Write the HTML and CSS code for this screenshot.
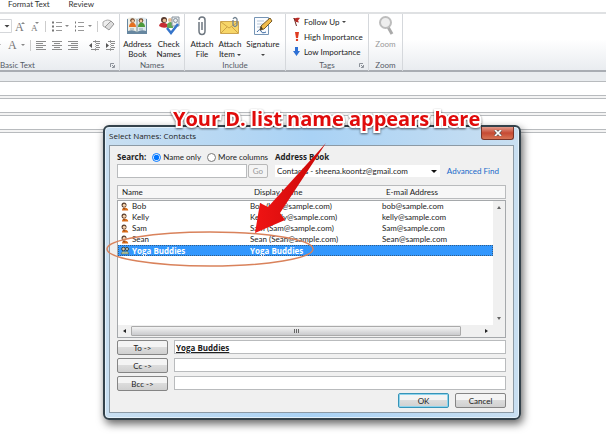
FILE: index.html
```html
<!DOCTYPE html>
<html lang="en">
<head>
<meta charset="utf-8">
<title>Select Names: Contacts</title>
<link rel="stylesheet" href="styles.css">
</head>
<body>
<svg class="sprite" aria-hidden="true">
  <symbol id="person" viewBox="0 0 8 9"><circle cx="3" cy="3" r="2.500" fill="#5b4030"/><circle cx="3.200" cy="3.200" r="1.500" fill="#f6d3ae"/><path d="M1 8.600c0-2 1-3 2.500-3s3.800 1 3.800 3z" fill="#d96c18"/><path d="M2 6l2 1" stroke="#704020" stroke-width=".8"/></symbol>
</svg>

<header>
  <nav class="tabs"><a href="#format">Format Text</a><a href="#review">Review</a></nav>
  <div class="ribbon">
    <section class="group">
      <div class="format">
        <svg viewBox="0 0 119 40" aria-hidden="true">
          <path d="M0 5.500h11.500v13H0" fill="#fff" stroke="#d5d7da"/>
          <path d="M4.500 11h5L7 13.500z" fill="#444"/>
          <path d="M21 10l2-2 2 2zM35 8h4l-2 2zM65 11h4l-2 2zM88 11h4l-2 2zM0 30h1l-1 1M21 30h4l-2 2z" fill="#888"/>
          <path d="M45.500 7v11M97.500 7v11M30.500 26v11" stroke="#ccc"/>
          <path d="M52 8.500h2M52 12.500h2M52 16.500h2M75 8.500h1M75 12.500h1M75 16.500h1" stroke="#777" stroke-width="2"/>
          <path d="M56 8.500h6M56 12.500h6M56 16.500h6M78 8.500h6M78 12.500h6M78 16.500h6" stroke="#999"/>
          <path d="M36 27.500h10M36 29.500h7M36 31.500h10M36 33.500h7M36 35.500h10M52 27.500h10M54 29.500h6M52 31.500h10M54 33.500h6M52 35.500h10M68 27.500h10M71 29.500h7M68 31.500h10M71 33.500h7M68 35.500h10M93 27.500h7M96 29.500h4M96 31.500h3M96 33.500h4M91 35.500h8M108 27.500h7M111 29.500h4M111 31.500h3M111 33.500h4M106 35.500h8" stroke="#8c8c8c"/>
          <path d="M89 31.500l3-2.500v5zM109 31.500l-3-2.500v5z" fill="#555"/>
          <path d="M95.500 26v11M110.500 26v11" stroke="#aaa" stroke-dasharray="1 1"/>
          <path d="M103 8q5-4 9 0v4q-4 4-9 0z" fill="#eee" stroke="#aaa"/><path d="M105 13l6-6 3 3-5 6z" fill="#ddd" stroke="#999"/>
        </svg>
        <span class="letter big">A</span><span class="letter small">A</span><span class="letter ink">A</span>
      </div>
      <h2 class="left">Basic Text<svg class="launch" viewBox="0 0 5 5"><path d="M.500 4V.500H4M2 2l2 2M4.500 2v2.500H2" fill="none" stroke="#8d929a"/></svg></h2>
    </section>
    <section class="group">
      <div class="tools names">
        <button type="button"><svg viewBox="0 0 22 20"><path d="M1 3q5-2 10 0 5-2 10 0v15H1z" fill="#6787a0"/><path d="M2 2q5-2 9 1v13q-4-3-9-1z" fill="#f0efe5"/><path d="M20 2q-5-2-9 1v13q4-3 9-1z" fill="#dfe9ed"/><circle cx="6.500" cy="4.500" r="2.300" fill="#674025"/><circle cx="6.700" cy="5" r="1.400" fill="#efc49c"/><path d="M3 11c0-6 7-6 7 0z" fill="#e57021"/><circle cx="15" cy="4.500" r="2.300" fill="#674025"/><circle cx="15" cy="5" r="1.400" fill="#efc49c"/><path d="M12 11c0-6 7-6 7 0z" fill="#4d9a3b"/><path d="M4 13h4M13 13h4" stroke="#8ba2b0"/><path d="M11 3v14" stroke="#74909c"/></svg>Address<br>Book</button>
        <button type="button"><svg viewBox="0 0 22 20"><circle cx="6" cy="4" r="3" fill="#583a2e"/><circle cx="6.500" cy="4.500" r="1.800" fill="#e9bd94"/><path d="M1 10q1-4 5-3 4 0 4 4-5 2-9-1z" fill="#c72d34"/><path d="M9 8q4-4 6 0v4H9z" fill="#61a754"/><circle cx="12" cy="4" r="2" fill="#e9bd94"/><path d="M14 1h7v9h-7z" fill="#e9edf0" stroke="#87939c"/><circle cx="17.500" cy="4.500" r="2" fill="none" stroke="#87939c"/><path d="M9 12l4 5 7-9" fill="none" stroke="#3574ca" stroke-width="2.500"/></svg>Check<br>Names</button>
      </div>
      <h2>Names</h2>
    </section>
    <section class="group">
      <div class="tools include">
        <button type="button"><svg viewBox="0 0 22 20"><path d="M8 6v9q0 3.500 3 3.500t3-3.500V4q0-3-3-3T8 4M11 6v8" fill="none" stroke="#6e7780" stroke-width="1.500"/></svg>Attach<br>File</button>
        <button type="button"><svg viewBox="0 0 22 20"><path d="M1.500 5.500h18v12h-18z" fill="#f7d668" stroke="#cda550"/><path d="M2 6l8 6 9-6M2 17l6-6M19 17l-6-6" fill="none" stroke="#cda344"/><path d="M14 4v5q2 3 4 0V3q-2-3-4 0" fill="none" stroke="#718391" stroke-width="1.300"/></svg>Attach<br>Item <i class="caret"></i></button>
        <button type="button"><svg viewBox="0 0 22 20"><path d="M2.500 1.500h14v17h-14z" fill="#fafcff" stroke="#7695b5"/><path d="M5 5h7M5 8h6M5 11h4" stroke="#b6c6d6"/><path d="M5 16q3-4 4-1t5 1" fill="none" stroke="#3766a1"/><path d="M8 14l1-4 9-8 2 3-8 8z" fill="#f1bc4c" stroke="#775b28"/><path d="M8 14l1-4 2 3z" fill="#443a2b"/></svg>Signature<br><i class="caret"></i></button>
      </div>
      <h2>Include</h2>
    </section>
    <section class="group">
      <div class="tags">
        <button type="button"><svg viewBox="0 0 9 9"><path d="M1 1c2 1 4-1 7 0L6 3.500l1 2-3-.5" fill="#b92a25"/><path d="M2 1l2.500 8" stroke="#6b2a22"/></svg>Follow Up <i class="caret"></i></button>
        <button type="button"><svg viewBox="0 0 9 9"><path d="M3 0h4L6 6H4z" fill="#df3b20"/><circle cx="5" cy="8" r="1.200" fill="#df3b20"/></svg>High Importance</button>
        <button type="button"><svg viewBox="0 0 9 9"><path d="M3 0h3v4h2L4.500 9 1 4h2z" fill="#2e70d4"/></svg>Low Importance</button>
      </div>
      <h2>Tags<svg class="launch" viewBox="0 0 5 5"><path d="M.500 4V.500H4M2 2l2 2M4.500 2v2.500H2" fill="none" stroke="#8d929a"/></svg></h2>
    </section>
    <section class="group">
      <div class="tools zoom">
        <button type="button" disabled><svg viewBox="0 0 22 20"><path d="M13 11l4 7" stroke="#aaa" stroke-width="3"/><circle cx="10.500" cy="6.500" r="5.500" fill="#eee" stroke="#bdbdbd" stroke-width="2"/></svg>Zoom</button>
      </div>
      <h2>Zoom</h2>
    </section>
  </div>
</header>
<div class="band"></div>
<div class="line"></div><div class="line"></div><div class="line"></div>

<main class="dialog" role="dialog" aria-labelledby="title">
  <div class="titlebar"><h1 id="title">Select Names: Contacts</h1><button type="button" class="close" aria-label="Close"><svg viewBox="0 0 8 6"><path d="M1 0l6 6M7 0L1 6" stroke="#555" stroke-width="3"/><path d="M1 0l6 6M7 0L1 6" stroke="#fff" stroke-width="1.700"/></svg></button></div>
  <form class="client">
    <div class="search">
      <div class="modes"><label class="strong" for="query">Search:</label>
        <label class="mode"><input type="radio" name="mode" checked>Name only</label>
        <label class="mode"><input type="radio" name="mode">More columns</label></div>
      <label class="strong" for="book">Address Book</label>
      <div class="find"><input type="text" id="query"><button type="button" disabled>Go</button></div>
      <div class="book"><span class="drop"><select id="book"><option>Contacts - sheena.koontz@gmail.com</option></select><svg viewBox="0 0 6 3"><path d="M0 0h6L3 3z" fill="#111"/></svg></span><a href="#advanced">Advanced Find</a></div>
    </div>
    <div class="list">
      <table>
        <thead><tr><th>Name</th><th>Display Name</th><th>E-mail Address</th></tr></thead>
        <tbody>
          <tr><td><svg><use href="#person"/></svg>Bob</td><td>Bob (bob@sample.com)</td><td>bob@sample.com</td></tr>
          <tr><td><svg><use href="#person"/></svg>Kelly</td><td>Kelly (kelly@sample.com)</td><td>kelly@sample.com</td></tr>
          <tr><td><svg><use href="#person"/></svg>Sam</td><td>Sam (Sam@sample.com)</td><td>Sam@sample.com</td></tr>
          <tr><td><svg><use href="#person"/></svg>Sean</td><td>Sean (Sean@sample.com)</td><td>Sean@sample.com</td></tr>
          <tr class="selected"><td><svg viewBox="0 0 8 9"><circle cx="2.500" cy="3" r="1.800" fill="#d8c3a8" stroke="#344"/><circle cx="6" cy="3" r="1.500" fill="#cdd" stroke="#344"/><path d="M0 8q1-4 4-2 3-2 4 2z" fill="#bcd0a4" stroke="#344" stroke-width=".5"/></svg>Yoga Buddies</td><td>Yoga Buddies</td><td></td></tr>
        </tbody>
      </table>
      <div class="vbar"><i class="up"></i><i class="down"></i></div>
      <div class="hbar"><i class="prev"></i><div class="thumb"><i></i><i></i><i></i></div><i class="next"></i></div>
    </div>
    <div class="recipients">
      <button type="button">To -&gt;</button><input type="text" class="to" aria-label="To" value="Yoga Buddies">
      <button type="button">Cc -&gt;</button><input type="text" aria-label="Cc">
      <button type="button">Bcc -&gt;</button><input type="text" aria-label="Bcc">
    </div>
    <div class="actions"><button type="button" class="ok">OK</button><button type="button">Cancel</button></div>
  </form>
</main>

<svg class="marks" viewBox="0 0 606 437" aria-hidden="true">
  <defs><linearGradient id="red" x1="0" x2="1"><stop offset="0" stop-color="#f01414"/><stop offset="1" stop-color="#c80808"/></linearGradient></defs>
  <ellipse cx="210" cy="249" rx="103" ry="17" fill="none" stroke="#d9825b" stroke-width="1.500"/>
  <path d="M326 143L268 207l-8-4-5 30 30-13-5-7z" fill="url(#red)"/>
</svg>
<p class="callout">Your D. list name appears here</p>
</body>
</html>
```
FILE: styles.css
```css
* { box-sizing: border-box; }
body { margin: 0; min-height: 100vh; overflow: hidden; position: relative; background: #fff; color: #222; font: 8px/12px Lato, "Open Sans", sans-serif; }
h1, h2, p { margin: 0; font: inherit; }
button, input, select { margin: 0; padding: 0; color: inherit; font: inherit; }
svg { display: block; }
.sprite { position: absolute; width: 0; height: 0; }
.tabs { display: flex; gap: 19px; height: 12px; padding: 0 8px; line-height: 9px; }
.tabs a { color: #333; text-decoration: none; }
.ribbon { display: grid; grid-template-columns: 120px 65px 101px 83px 34px; height: 60px; border-top: 2px solid #dfe1e3; border-bottom: 2px solid #a9adb3; background: linear-gradient(#fff 45%, #e9ecf0); }
.group { display: grid; grid-template-rows: 1fr 12px; border-right: 1px solid #d5d8dc; }
.group h2 { position: relative; color: #555b66; text-align: center; }
.group h2.left { text-align: left; }
.launch { position: absolute; right: 4px; top: 4px; width: 5px; height: 5px; }
.format { position: relative; }
.format svg { width: 119px; height: 40px; }
.letter { position: absolute; color: #777; font-family: "Liberation Serif", serif; }
.big { left: 15px; top: 7px; font-size: 12px; }
.small { left: 31px; top: 8px; font-size: 9px; }
.ink { left: 8px; top: 25px; font-size: 12px; }
.tools { display: flex; justify-content: center; gap: 5px; padding-top: 2px; }
.tools button, .tags button { border: 0; background: none; line-height: 10px; white-space: nowrap; }
.tools button { display: block; align-self: start; }
.tools svg { width: 22px; height: 20px; margin: 0 auto 3px; }
.tags { display: grid; grid-template-rows: repeat(3, 15px); padding-left: 6px; }
.tags button { display: flex; align-items: center; gap: 3px; }
.tags svg { width: 9px; height: 9px; }
.caret { display: inline-block; border: 2px solid transparent; border-top-color: #444; border-bottom: 0; vertical-align: middle; }
.tools button:disabled, .find button:disabled { color: #999; }
.band { height: 10px; border-bottom: 1px solid #b8bbbe; background: #e9ecef; }
.line { height: 4px; margin-top: 13px; border: 1px solid #b8bbbe; border-width: 1px 0; background: #f4f4f4; }
.dialog { position: absolute; left: 103px; right: 85px; top: 125px; padding: 0 5px 5px 4px; border: 2px solid #34424b; border-radius: 6px; background: linear-gradient(90deg, #c9dff1, #a9d2f5 50%, #c9dff1); box-shadow: 2px 4px 9px #0009, inset 0 0 0 1px #e4f1fa; }
.titlebar { display: flex; justify-content: space-between; height: 18px; font-family: "Open Sans", sans-serif; line-height: 18px; }
.close { width: 33px; height: 13px; display: grid; place-items: center; border: 1px solid #793328; border-top: 0; border-radius: 0 0 3px 3px; background: linear-gradient(#e29b8b, #c64a33 50%, #d77455); }
.close svg { width: 8px; height: 6px; }
.client { display: block; padding: 5px 7px 4px; border: 1px solid #8c9aa5; background: #f0f0f0; }
.search { display: grid; grid-template-columns: 151px 1fr; grid-template-rows: 12px 14px; gap: 1px 7px; }
.strong { font-family: "Open Sans", sans-serif; font-weight: bold; }
.modes, .mode, .find, .book { display: flex; align-items: center; white-space: nowrap; }
.modes { gap: 6px; }
.mode { gap: 2px; }
.mode input { width: 9px; height: 9px; }
.find { gap: 1px; }
.find input { flex: 1; min-width: 0; height: 14px; }
.find button { width: 20px; height: 14px; border: 1px solid #b8b8b8; border-radius: 2px; background: #f4f4f4; }
input[type="text"] { border: 1px solid #b9bbbd; background: #fff; }
.book { justify-content: space-between; padding-right: 7px; }
.drop { position: relative; width: 165px; }
.drop select { display: block; width: 100%; height: 12px; padding: 0 12px 0 2px; border: 0; background: #fff; appearance: none; line-height: 12px; }
.drop svg { position: absolute; right: 3px; top: 5px; width: 6px; height: 3px; pointer-events: none; }
.book a { color: #1769ca; text-decoration: none; }
.list { position: relative; height: 153px; margin-top: 7px; }
table, thead, tbody { display: block; }
tr { display: grid; grid-template-columns: 132px 132px 1fr; }
th, td { padding: 0; font-weight: inherit; text-align: left; }
thead { height: 14px; padding-left: 4px; border: 1px solid #b9bbbd; background: #f7f7f7; }
tbody { height: 138px; margin-top: 1px; border: 1px solid #a5a8ab; background: #fff; }
tbody tr { height: 11px; margin-right: 12px; line-height: 11px; }
td:first-child { display: flex; align-items: center; gap: 3px; padding-left: 3px; }
td svg { width: 8px; height: 9px; }
.selected { background: #3297fd; color: #fff; font-family: "Open Sans", sans-serif; font-weight: bold; outline: 1px dotted #335d86; outline-offset: -1px; }
.vbar { position: absolute; right: 1px; top: 16px; bottom: 13px; width: 12px; padding: 5px 4px; display: flex; flex-direction: column; justify-content: space-between; background: #f0f0f0; }
.hbar { position: absolute; left: 1px; right: 1px; bottom: 1px; height: 12px; padding: 1px 17px 1px 5px; display: flex; align-items: center; background: #f0f0f0; }
.vbar i, .hbar > i { width: 0; height: 0; border: 2px solid transparent; }
.vbar .up { border-bottom: 3px solid #666; border-top: 0; }
.vbar .down { border-top: 3px solid #666; border-bottom: 0; }
.hbar .prev { border-right: 3px solid #222; border-left: 0; }
.hbar .next { border-left: 3px solid #222; border-right: 0; }
.thumb { flex: 1; height: 10px; display: flex; justify-content: center; align-items: center; gap: 1px; margin: 0 24px 0 5px; border: 1px solid #aaa; border-radius: 1px; background: linear-gradient(#f3f3f3, #c9cacd); }
.thumb i { width: 1px; height: 4px; background: #666; }
.recipients { display: grid; grid-template-columns: 51px 1fr; grid-auto-rows: 15px; gap: 3px 6px; margin-top: 2px; }
.recipients button, .actions button { border: 1px solid #858585; border-radius: 2px; background: linear-gradient(#f4f4f4 45%, #dcdcdc 50%, #d0d0d0); }
.recipients input { min-width: 0; height: 14px; padding: 0 1px; }
.recipients .to { font-family: "Open Sans", sans-serif; font-weight: bold; text-decoration: underline; }
.actions { display: grid; grid-template-columns: 51px 51px; grid-auto-rows: 15px; justify-content: end; gap: 6px; margin-top: 2px; }
.actions .ok { border-color: #3794b8; box-shadow: inset 0 0 0 1px #8ed4ed; }
.marks { position: absolute; left: 0; top: 0; width: 606px; height: 437px; pointer-events: none; }
.callout { position: absolute; left: 173px; top: 105px; color: #e00b0b; font-family: "Open Sans", sans-serif; font-size: 20px; font-weight: bold; line-height: 28px; white-space: nowrap; -webkit-text-stroke: 4px #fff; paint-order: stroke fill; filter: drop-shadow(0 1px 1px #0009); }
```
